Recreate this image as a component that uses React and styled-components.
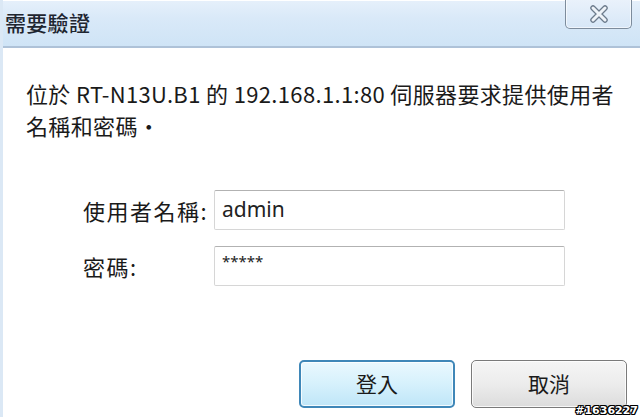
import React from "react";
import styled, { createGlobalStyle } from "styled-components";

const Global = createGlobalStyle`
  html, body { margin: 0; padding: 0; background: #fff; }
  body { font-family: "Noto Sans CJK TC", "Noto Sans", sans-serif; }
  * { box-sizing: border-box; }
`;

const Window = styled.div`
  position: relative;
  width: 640px;
  height: 417px;
  overflow: hidden;
  background: #fff;
  display: flex;
  flex-direction: column;
  border-left: 3px solid #dbe8f5;
`;

const TitleBar = styled.div`
  position: relative;
  height: 48px;
  flex: none;
  display: flex;
  align-items: center;
  padding-left: 2px;
  background: linear-gradient(#e6f0fb 0%, #d9e9f8 40%, #cfe4f6 100%);
  border-bottom: 2px solid #aec2d8;
  box-shadow: inset 0 5px 0 -4px #ffffff;
`;

const Title = styled.div`
  font-size: 21px;
  font-weight: 500;
  color: #1e2530;
  letter-spacing: 0.3px;
  margin-top: -2px;
`;

const CloseButton = styled.div`
  position: absolute;
  right: 8px;
  top: -1px;
  width: 67px;
  height: 30px;
  border: 1px solid #7d8c9c;
  border-top: none;
  border-radius: 0 0 5px 5px;
  background: linear-gradient(#eaf2fb, #d7e7f7);
  box-shadow: inset 0 0 0 1px rgba(255, 255, 255, 0.6);
  display: flex;
  align-items: center;
  justify-content: center;
`;

const Body = styled.div`
  flex: 1;
  display: flex;
  flex-direction: column;
  padding: 29px 13px 0 23px;
`;

const Message = styled.p`
  margin: 0;
  font-size: 22px;
  line-height: 32px;
  letter-spacing: 0.35px;
  color: #1a1a1a;
  white-space: nowrap;
`;

const Form = styled.div`
  display: grid;
  grid-template-columns: 131px 351px;
  row-gap: 16px;
  align-items: center;
  margin: 49px 0 0 57px;
`;

const Label = styled.label`
  font-size: 22px;
  letter-spacing: 1.5px;
  color: #1a1a1a;
`;

const Field = styled.input`
  width: 351px;
  height: 40px;
  border: 1px solid #d6d6d6;
  border-top-color: #b2b2b2;
  border-radius: 2px;
  padding: 0 7px;
  font-family: "Noto Sans", "Noto Sans CJK TC", sans-serif;
  font-size: ${(p) => (p.$masked ? "15px" : "21px")};
  color: #222;
  background: #fff;
  outline: none;
  padding-bottom: ${(p) => (p.$masked ? "10px" : "2px")};
  letter-spacing: 0;
`;

const Buttons = styled.div`
  margin-top: auto;
  margin-bottom: 9px;
  display: flex;
  justify-content: flex-end;
  gap: 16px;
`;

const Button = styled.button`
  width: 156px;
  height: 48px;
  font-family: "Noto Sans CJK TC", sans-serif;
  font-size: 21px;
  color: #1a1a1a;
  border-radius: 5px;
  border: ${(p) => (p.$primary ? "2px solid #3f87b8" : "1px solid #7a7a7a")};
  background: ${(p) =>
    p.$primary
      ? "linear-gradient(#eaf8fe 0%, #d6f1fc 50%, #bfe6f8 100%)"
      : "linear-gradient(#f5f5f5 0%, #ececec 50%, #dcdcdc 100%)"};
  box-shadow: inset 0 0 0 1px rgba(255, 255, 255, 0.8);
  padding: 0 0 2px;
`;

const Watermark = styled.div`
  position: absolute;
  right: 2px;
  bottom: 0px;
  font-family: "DejaVu Sans", sans-serif;
  font-weight: bold;
  font-size: 11px;
  line-height: 12px;
  color: #fff;
  text-shadow: 1px 0 0 #000, -1px 0 0 #000, 0 1px 0 #000, 0 -1px 0 #000,
    1px 1px 0 #000, -1px -1px 0 #000, 1px -1px 0 #000, -1px 1px 0 #000;
`;

function CloseIcon() {
  return (
    <svg width="20" height="18" viewBox="0 0 20 18">
      <path d="M4 3 L16 15 M16 3 L4 15" stroke="#6c7b8c" strokeWidth="5.5" strokeLinecap="round" fill="none" />
      <path d="M4 3 L16 15 M16 3 L4 15" stroke="#eef3f8" strokeWidth="3" strokeLinecap="round" fill="none" />
    </svg>
  );
}

export default function App() {
  return (
    <>
      <Global />
      <Window>
        <TitleBar>
          <Title>需要驗證</Title>
          <CloseButton>
            <CloseIcon />
          </CloseButton>
        </TitleBar>
        <Body>
          <Message>
            位於 RT-N13U.B1 的 192.168.1.1:80 伺服器要求提供使用者
            <br />
            名稱和密碼•
          </Message>
          <Form>
            <Label>使用者名稱:</Label>
            <Field readOnly value="admin" />
            <Label>密碼:</Label>
            <Field readOnly $masked value="*****" />
          </Form>
          <Buttons>
            <Button $primary>登入</Button>
            <Button>取消</Button>
          </Buttons>
        </Body>
        <Watermark>#1636227</Watermark>
      </Window>
    </>
  );
}
